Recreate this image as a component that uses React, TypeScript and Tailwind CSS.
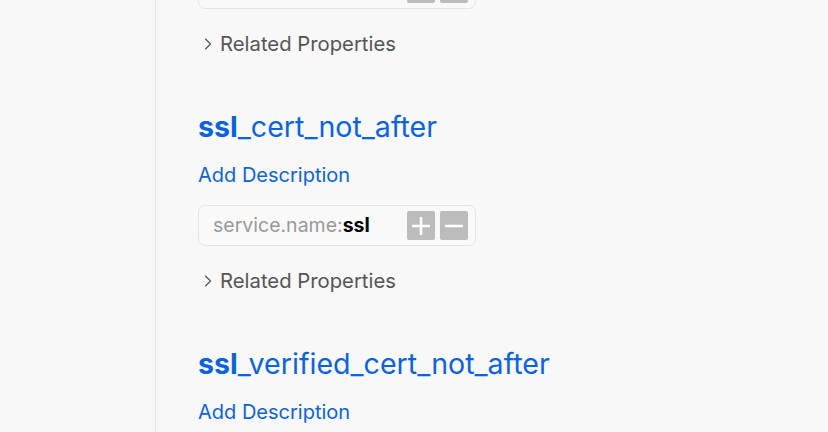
import { ChevronRight } from "lucide-react";

type Field = { rest: string; value: string; part?: "head" | "tail" };

// the list is scrolled: first entry only shows its tail, last only its head
const fields: Field[] = [
  { rest: "_cert_not_before", value: "ssl", part: "tail" },
  { rest: "_cert_not_after", value: "ssl" },
  { rest: "_verified_cert_not_after", value: "ssl", part: "head" },
];

const FilterBox = ({ value, showLabel }: { value: string; showLabel: boolean }) => (
  <div className="flex items-center justify-between w-[278px] h-[41px] pl-[14px] pr-[7px] rounded-[7px] border border-[#e4e4e4] bg-[#f9f9f9]">
    <span className="text-[19.5px] text-[#999999]">
      {showLabel && (
        <>
          service.name:<span className="font-bold text-black">{value}</span>
        </>
      )}
    </span>
    <div className="flex gap-[5px]">
      <button className="w-[28px] h-[29px] rounded-[2px] bg-[#bcbcbc] flex items-center justify-center">
        <svg width="20" height="20" viewBox="0 0 20 20">
          <path d="M10 1v18M1 10h18" stroke="white" strokeWidth="2.6" />
        </svg>
      </button>
      <button className="w-[28px] h-[29px] rounded-[2px] bg-[#bcbcbc] flex items-center justify-center">
        <svg width="20" height="20" viewBox="0 0 20 20">
          <path d="M1 10h18" stroke="white" strokeWidth="2.6" />
        </svg>
      </button>
    </div>
  </div>
);

const FieldItem = ({ rest, value, part }: Field) => (
  <div className="flex flex-col">
    {part !== "tail" && (
      <>
        <h3 className="h-[32px] leading-[32px] text-[28.6px] text-[#0b64dd] font-normal whitespace-nowrap">
          <span className="font-bold">ssl</span>
          {rest}
        </h3>
        <a className="mt-[20px] mb-[18px] h-[24px] leading-[24px] text-[20px] text-[#0b64dd]">
          Add Description
        </a>
      </>
    )}
    {part !== "head" && (
      <>
        <FilterBox value={value} showLabel={part !== "tail"} />
        <div className="mt-[23px] h-[24px] flex items-center gap-[2px] text-[20.3px] text-[#555555]">
          <ChevronRight size={20} strokeWidth={1.4} className="text-[#555555]" />
          <span>Related Properties</span>
        </div>
      </>
    )}
  </div>
);

export default function App() {
  return (
    <div
      className="w-[828px] h-[432px] overflow-hidden bg-[#f8f8f8] flex"
      style={{ fontFamily: "Inter, 'Noto Sans', sans-serif" }}
    >
      <div className="w-[156px] shrink-0 border-r border-[#e6e6e6]" />
      <div className="pl-[42px] flex flex-col gap-[55px] mt-[-32px]">
        {fields.map((f, i) => (
          <FieldItem key={i} {...f} />
        ))}
      </div>
    </div>
  );
}
